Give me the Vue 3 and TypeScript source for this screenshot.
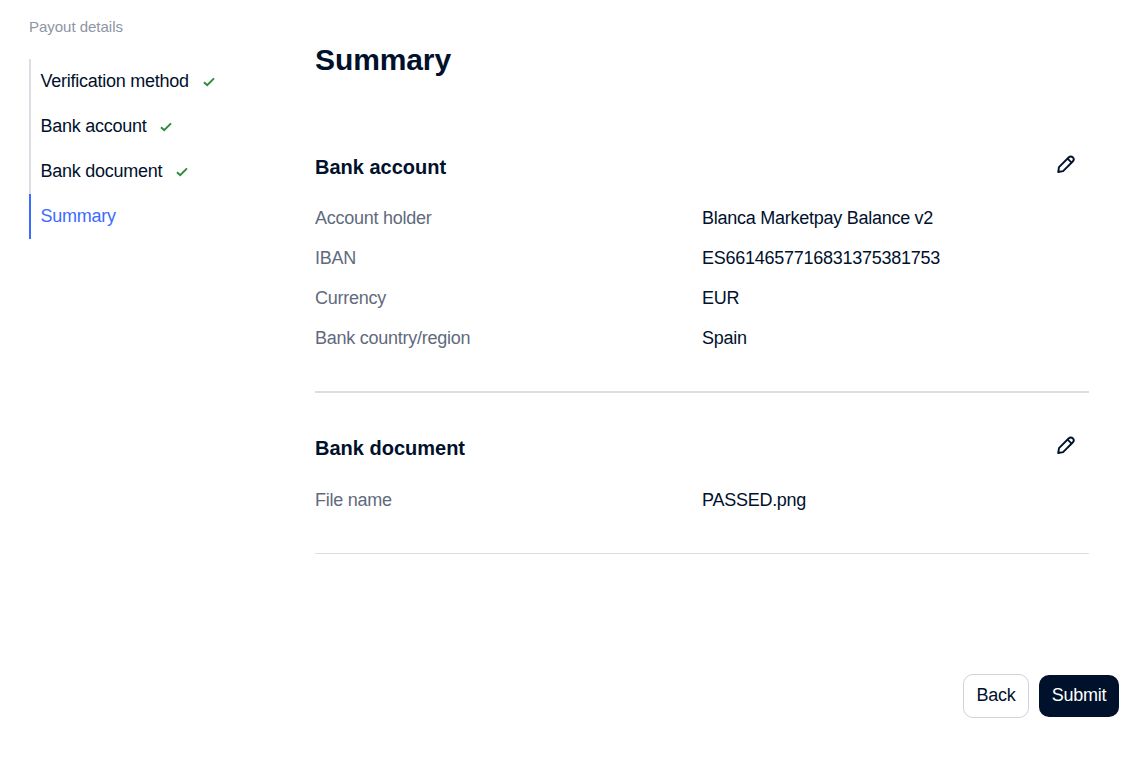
<script setup lang="ts">
interface Row { label: string; value: string }
interface Section { title: string; rows: Row[] }

const steps = [
  { name: 'Verification method', done: true },
  { name: 'Bank account', done: true },
  { name: 'Bank document', done: true },
  { name: 'Summary', done: false },
]

const sections: Section[] = [
  {
    title: 'Bank account',
    rows: [
      { label: 'Account holder', value: 'Blanca Marketpay Balance v2' },
      { label: 'IBAN', value: 'ES6614657716831375381753' },
      { label: 'Currency', value: 'EUR' },
      { label: 'Bank country/region', value: 'Spain' },
    ],
  },
  {
    title: 'Bank document',
    rows: [{ label: 'File name', value: 'PASSED.png' }],
  },
]
</script>

<template>
  <div class="page">
    <div class="columns">
      <aside class="sidebar">
        <div class="side-title">Payout details</div>
        <ul class="steps">
          <li v-for="s in steps" :key="s.name" class="step" :class="{ active: !s.done }">
            <span>{{ s.name }}</span>
            <svg v-if="s.done" class="check" width="14" height="14" viewBox="0 0 14 14" fill="none">
              <path d="M2 7.2 5.2 10.2 12 3.4" stroke="#2e8b3d" stroke-width="2" />
            </svg>
          </li>
        </ul>
      </aside>
      <main class="main">
        <h1 class="heading">Summary</h1>
        <section v-for="sec in sections" :key="sec.title" class="section">
          <div class="section-head">
            <h2 class="section-title">{{ sec.title }}</h2>
            <button class="edit" type="button" aria-label="Edit">
              <svg width="20" height="20" viewBox="0 0 20 20" fill="none" stroke="#00112c" stroke-width="1.9" stroke-linejoin="round">
                <path d="M2.2 18 3 13.1 12.6 3.5C13.8 2.3 15.6 2.2 16.8 3.3 18 4.5 17.9 6.3 16.7 7.5L7.1 17.1Z" />
                <path d="M11.6 4.6 15.6 8.6" />
              </svg>
            </button>
          </div>
          <div v-for="r in sec.rows" :key="r.label" class="row">
            <span class="label">{{ r.label }}</span>
            <span class="value">{{ r.value }}</span>
          </div>
        </section>
      </main>
    </div>
    <div class="footer">
      <button class="btn back" type="button">Back</button>
      <button class="btn submit" type="button">Submit</button>
    </div>
  </div>
</template>

<style>
body { background: #fff; }
</style>

<style scoped>
.page {
  width: 1145px;
  height: 772px;
  box-sizing: border-box;
  font-family: "Liberation Sans", Arial, sans-serif;
  color: #00112c;
  display: flex;
  flex-direction: column;
  overflow: hidden;
}
.columns {
  display: flex;
  height: 674px;
  padding-left: 29px;
  padding-right: 56px;
}
.sidebar { width: 286px; flex: none; padding-top: 18px; }
.side-title { font-size: 15px; line-height: 18px; color: #8d95a3; letter-spacing: -0.02px; }
.steps { list-style: none; margin: 23px 0 0; padding: 0; }
.step {
  height: 45px;
  box-sizing: border-box;
  display: flex;
  align-items: center;
  gap: 13px;
  padding-left: 9.5px;
  border-left: 2px solid #dbdee2;
  font-size: 18px;
  letter-spacing: -0.26px;
}
.step.active { color: #3b6bff; border-left-color: #3b6bff; }
.check { flex: none; margin-top: 1px; }
.main { flex: 1; min-width: 0; }
.heading {
  margin: 0;
  padding-top: 41px;
  font-size: 30px;
  line-height: 38px;
  font-weight: 700;
  letter-spacing: -0.1px;
  height: 79px;
  box-sizing: border-box;
}
.section {
  border-bottom: 1px solid #dbdee2;
  padding-top: 43px;
  padding-bottom: 33px;
}
.section:first-of-type { margin-top: 33px; border-bottom-width: 2px; }
.section:first-of-type .section-head { height: 43px; }
.section-head {
  display: flex;
  justify-content: space-between;
  align-items: flex-start;
  height: 44px;
}
.section-title { margin: 0; font-size: 20px; line-height: 24px; font-weight: 700; }
.edit {
  border: 0;
  background: none;
  padding: 0;
  margin: -1px 13px 0 0;
  width: 20px;
  height: 20px;
}
.row { display: flex; height: 40px; align-items: center; font-size: 18px; letter-spacing: -0.26px; }
.label { width: 387px; flex: none; color: #5f6a7d; }
.footer {
  display: flex;
  justify-content: flex-end;
  align-items: center;
  gap: 10px;
  padding-right: 26px;
}
.btn {
  font: inherit;
  font-size: 18px;
  letter-spacing: -0.26px;
  height: 44px;
  border-radius: 10px;
  padding: 0 0 2px;
  box-sizing: border-box;
}
.back { width: 66px; background: #fff; color: #00112c; border: 1px solid #cfd3d9; }
.submit { width: 80px; height: 42px; background: #00112c; color: #fff; border: 0; }
</style>
